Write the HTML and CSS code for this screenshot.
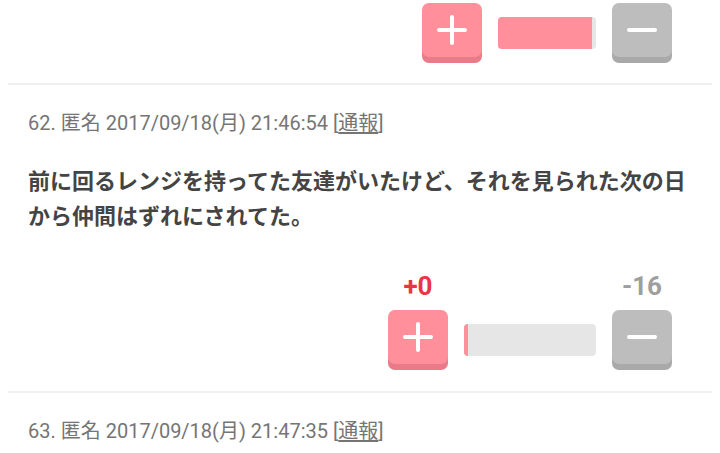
FILE: index.html
```html
<!DOCTYPE html>
<html lang="ja">
<head>
<meta charset="utf-8">
<title>コメント</title>
<link rel="stylesheet" href="styles.css">
</head>
<body>
<div class="page">
  <div class="vote vote-first">
    <div class="vote-row">
      <div class="vote-col">
        <button class="btn btn-plus" aria-label="プラス">
          <svg width="30" height="30" viewBox="0 0 30 30"><path d="M15 2 V28 M2 15 H28" stroke="#fff" stroke-width="4" stroke-linecap="round" fill="none"/></svg>
        </button>
      </div>
      <div class="bar bar-short"><div class="fill" style="width:94px"></div></div>
      <div class="vote-col">
        <button class="btn btn-minus" aria-label="マイナス">
          <svg width="30" height="30" viewBox="0 0 30 30"><path d="M2 15 H28" stroke="#fff" stroke-width="4" stroke-linecap="round" fill="none"/></svg>
        </button>
      </div>
    </div>
  </div>

  <div class="post">
    <div class="meta">62. 匿名 2017/09/18(月) 21:46:54 [<span class="report">通報</span>]</div>
    <div class="text">前に回るレンジを持ってた友達がいたけど、それを見られた次の日から仲間はずれにされてた。</div>
    <div class="vote">
      <div class="vote-row">
        <div class="vote-col">
          <div class="count count-plus">+0</div>
          <button class="btn btn-plus" aria-label="プラス">
            <svg width="30" height="30" viewBox="0 0 30 30"><path d="M15 2 V28 M2 15 H28" stroke="#fff" stroke-width="4" stroke-linecap="round" fill="none"/></svg>
          </button>
        </div>
        <div class="bar bar-long"><div class="fill" style="width:4px"></div></div>
        <div class="vote-col">
          <div class="count count-minus">-16</div>
          <button class="btn btn-minus" aria-label="マイナス">
            <svg width="30" height="30" viewBox="0 0 30 30"><path d="M2 15 H28" stroke="#fff" stroke-width="4" stroke-linecap="round" fill="none"/></svg>
          </button>
        </div>
      </div>
    </div>
  </div>

  <div class="post">
    <div class="meta">63. 匿名 2017/09/18(月) 21:47:35 [<span class="report">通報</span>]</div>
  </div>
</div>
</body>
</html>
```

FILE: styles.css
```css
html, body {
  margin: 0;
  padding: 0;
  background: #fff;
}
body {
  font-family: Roboto, "Noto Sans CJK JP", sans-serif;
  overflow: hidden;
}
.page {
  padding: 0 8px;
}
.vote {
  padding: 0 40px 21px 0;
  border-bottom: 2px solid #f0f0f0;
}
.vote-first {
  padding-top: 3px;
  padding-bottom: 20px;
}
.vote-row {
  display: flex;
  justify-content: flex-end;
  align-items: flex-end;
  gap: 16px;
}
.vote-col {
  display: flex;
  flex-direction: column;
  align-items: center;
  gap: 10px;
}
.count {
  font-weight: 700;
  font-size: 26px;
  line-height: 28px;
}
.count-plus { color: #ea3445; }
.count-minus { color: #9e9e9e; }
.btn {
  width: 60px;
  height: 54px;
  margin: 0 0 6px 0;
  padding: 0;
  border: none;
  border-radius: 7px;
  display: flex;
  align-items: center;
  justify-content: center;
}
.btn-plus {
  background: #ff8f9b;
  box-shadow: 0 6px 0 #ea7a88;
}
.btn-minus {
  background: #bdbdbd;
  box-shadow: 0 6px 0 #a9a9a9;
}
.bar {
  height: 32px;
  margin-bottom: 14px;
  border-radius: 4px;
  background: #e6e6e6;
  overflow: hidden;
}
.bar-short { width: 98px; }
.bar-long { width: 132px; }
.fill {
  height: 100%;
  background: #ff8f9b;
}
.post {
  padding-top: 24px;
}
.meta {
  padding-left: 20px;
  font-size: 20px;
  line-height: 28px;
  color: #757575;
}
.report {
  text-decoration: underline;
  text-underline-offset: 2px;
}
.text {
  margin-top: 27px;
  padding-left: 20px;
  padding-right: 20px;
  font-size: 22px;
  line-height: 35px;
  font-weight: 700;
  color: #444;
}
.post .vote {
  margin-top: 38px;
}
```
